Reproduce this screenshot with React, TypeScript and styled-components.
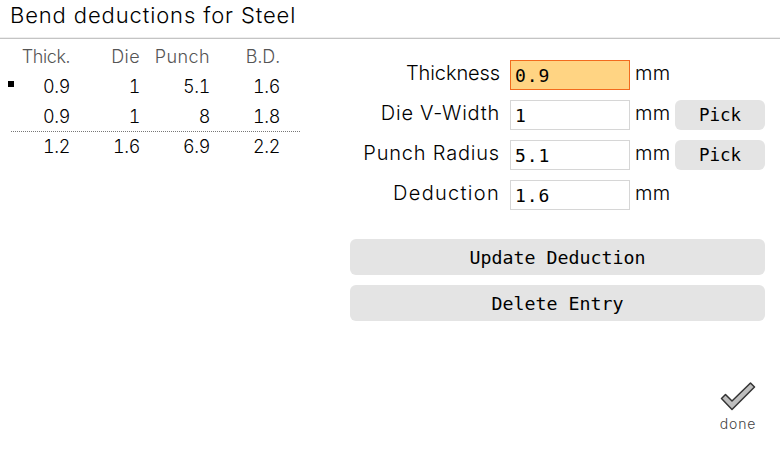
import React from "react";
import styled, { createGlobalStyle } from "styled-components";

const GlobalStyle = createGlobalStyle`
  body { margin: 0; background: #fff; overflow: hidden; }
  * { box-sizing: border-box; }
`;

const Page = styled.div`
  width: 780px;
  height: 450px;
  display: flex;
  flex-direction: column;
  background: #fff;
  color: #000;
  font-family: Inter, "Noto Sans", sans-serif;
  font-weight: 300;
`;

const Header = styled.header`
  height: 39px;
  padding-left: 10px;
  border-bottom: 1px solid #c4c4c4;
  box-shadow: 0 -1px 0 #eee inset;
`;

const Title = styled.h1`
  margin: 0;
  font-size: 22px;
  font-weight: 300;
  line-height: 31px;
  letter-spacing: 0.88px;
  white-space: nowrap;
`;

const Content = styled.main`
  display: flex;
  flex: 1;
`;

const Table = styled.div`
  width: 290px;
  margin: 3px 50px 0 10px;
`;

const Row = styled.div<{ $heading?: boolean; $divided?: boolean; $selected?: boolean }>`
  position: relative;
  display: grid;
  grid-template-columns: 60px 70px 70px 70px;
  height: 30px;
  line-height: 30px;
  text-align: right;
  font-size: 18px;
  color: ${(p) => (p.$heading ? "#555" : "#000")};
  white-space: nowrap;
  ${(p) =>
    p.$divided &&
    `&::before { content: ""; position: absolute; top: -1px; left: 1px; right: 0; height: 1px;
      background: repeating-linear-gradient(90deg, #777 0 1px, #fff 1px 2px); }`}
  ${(p) =>
    p.$selected &&
    `&::after { content: ""; position: absolute; left: -2px; top: 9px; width: 6px; height: 6px; background: #000; }`}
`;

const Cell = styled.span<{ $spacing?: number }>`
  font-variant-numeric: tabular-nums;
  letter-spacing: ${(p) => p.$spacing ?? -0.4}px;
`;

const Panel = styled.section`
  width: 415px;
  padding-top: 21px;
  display: flex;
  flex-direction: column;
`;

const Field = styled.div`
  display: grid;
  grid-template-columns: 155px 120px 35px 90px;
  column-gap: 5px;
  height: 30px;
  margin-bottom: 10px;
`;

const Label = styled.label<{ $spacing: number }>`
  padding-right: 5px;
  text-align: right;
  font-size: 20px;
  line-height: 27px;
  letter-spacing: ${(p) => p.$spacing}px;
  white-space: nowrap;
`;

const Input = styled.input<{ $active?: boolean }>`
  width: 120px;
  height: 30px;
  padding: 1px 4px 0;
  border: 1px solid ${(p) => (p.$active ? "#f26b1d" : "#d6d6d6")};
  border-radius: 0;
  outline: 0;
  background: ${(p) => (p.$active ? "#ffd483" : "#fff")};
  color: #000;
  font: 400 18px "DejaVu Sans Mono", monospace;
  letter-spacing: 0.9px;
`;

const Unit = styled.span`
  font-size: 20px;
  line-height: 27px;
  letter-spacing: 0.2px;
`;

const Button = styled.button<{ $wide?: boolean }>`
  width: ${(p) => (p.$wide ? "415px" : "90px")};
  height: ${(p) => (p.$wide ? "36px" : "30px")};
  margin: 0 0 ${(p) => (p.$wide ? "10px" : "0")};
  padding: 0;
  border: 0;
  border-radius: 6px;
  background: #e4e4e4;
  color: #000;
  font: 400 ${(p) => (p.$wide ? "18.27px" : "17.5px")} "DejaVu Sans Mono", monospace;
`;

const Actions = styled.div`
  display: flex;
  flex-direction: column;
  margin-top: 19px;
`;

const Done = styled.button`
  align-self: flex-end;
  display: flex;
  flex-direction: column;
  align-items: center;
  width: 54px;
  margin-top: 51px;
  padding: 0;
  border: 0;
  background: none;
  color: #444;
  font: 300 14px/17px Inter, "Noto Sans", sans-serif;
  letter-spacing: 0.8px;
`;

const CheckIcon = styled.svg`
  display: block;
  width: 36px;
  height: 30px;
  margin-bottom: 3px;
`;

const columns = [
  { name: "Thick.", spacing: 0 },
  { name: "Die", spacing: 0.4 },
  { name: "Punch", spacing: 0.4 },
  { name: "B.D.", spacing: 0 },
];

const rows = [
  ["0.9", "1", "5.1", "1.6"],
  ["0.9", "1", "8", "1.8"],
  ["1.2", "1.6", "6.9", "2.2"],
];

const fields = [
  { label: "Thickness", value: "0.9", spacing: -0.1 },
  { label: "Die V-Width", value: "1", spacing: 0.75, pick: true },
  { label: "Punch Radius", value: "5.1", spacing: 0.8, pick: true },
  { label: "Deduction", value: "1.6", spacing: 1.3 },
];

export default function App() {
  return (
    <Page>
      <GlobalStyle />
      <Header>
        <Title>Bend deductions for Steel</Title>
      </Header>
      <Content>
        <Table>
          <Row $heading>
            {columns.map((c) => (
              <Cell key={c.name} $spacing={c.name === "Thick." ? -0.4 : c.spacing}>
                {c.name}
              </Cell>
            ))}
          </Row>
          {rows.map((row, i) => (
            <Row key={i} $selected={i === 0} $divided={i === 2}>
              {row.map((cell, j) => (
                <Cell key={j}>{cell}</Cell>
              ))}
            </Row>
          ))}
        </Table>
        <Panel>
          {fields.map((f, i) => (
            <Field key={f.label}>
              <Label $spacing={f.spacing}>{f.label}</Label>
              <Input $active={i === 0} defaultValue={f.value} aria-label={f.label} />
              <Unit>mm</Unit>
              {f.pick && <Button>Pick</Button>}
            </Field>
          ))}
          <Actions>
            <Button $wide>Update Deduction</Button>
            <Button $wide>Delete Entry</Button>
          </Actions>
          <Done>
            <CheckIcon viewBox="0 0 36 30" aria-hidden="true">
              <path
                d="M1.5 16.5 L5.5 12.5 L12 19 L30.5 1 L34.5 5 L12 27.5 Z"
                fill="#bebebe"
                stroke="#333"
                strokeWidth="1.5"
                strokeLinejoin="round"
              />
            </CheckIcon>
            done
          </Done>
        </Panel>
      </Content>
    </Page>
  );
}
